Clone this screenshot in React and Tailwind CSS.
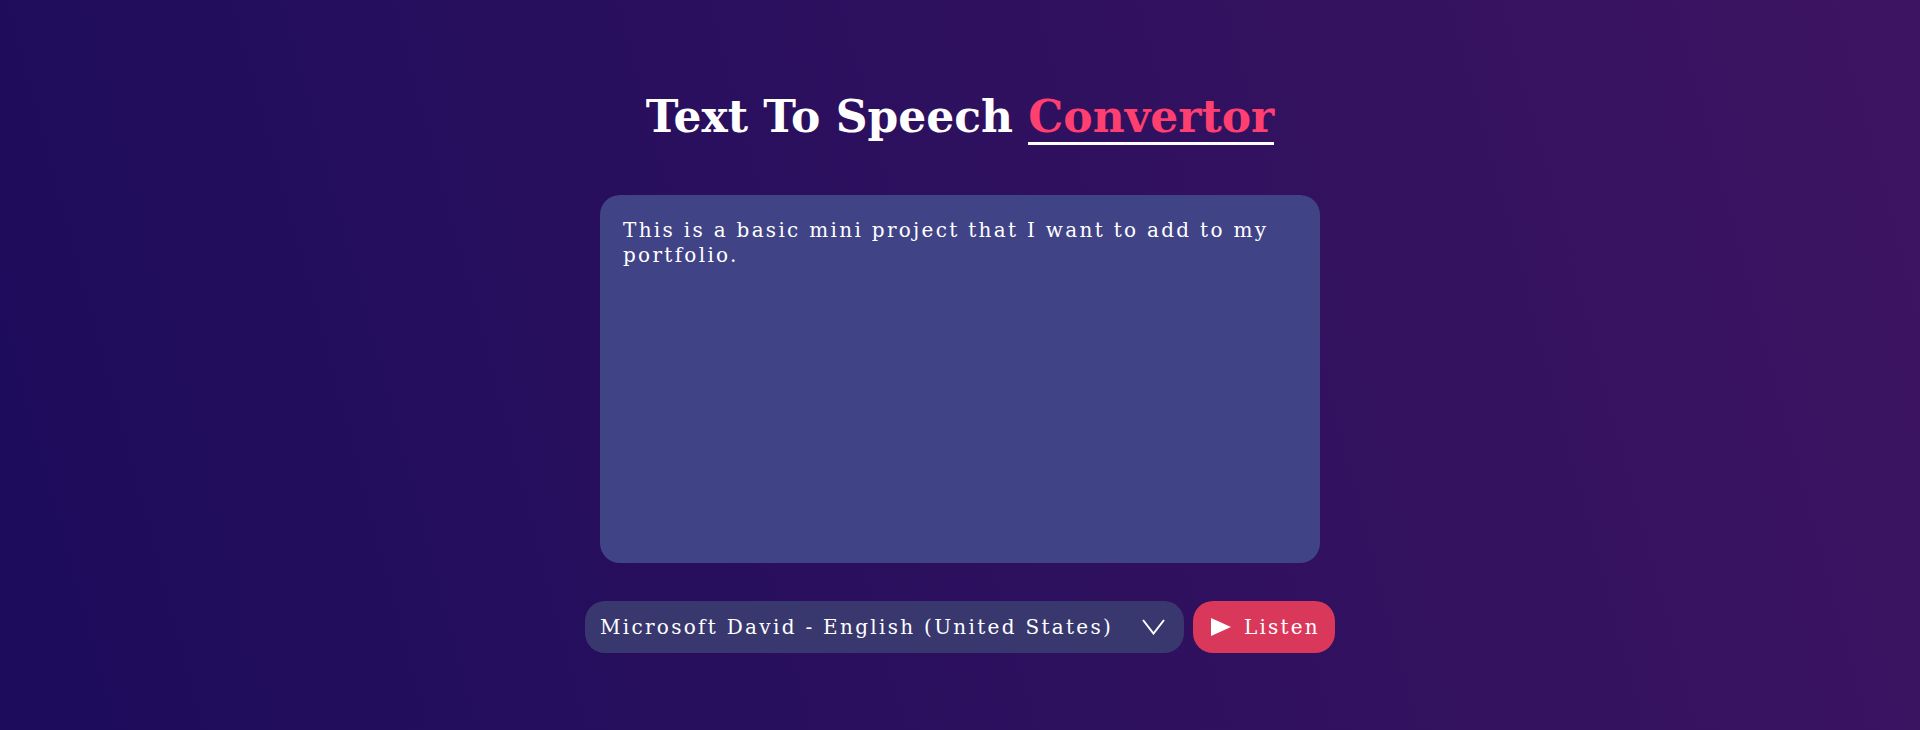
import { useState, useRef, useEffect } from "react";

const voices = [
  "Microsoft David - English (United States)",
  "Microsoft Zira - English (United States)",
  "Google US English",
];

const App = () => {
  const [text, setText] = useState(
    "This is a basic mini project that I want to add to my portfolio."
  );
  const [voice, setVoice] = useState(voices[0]);
  const areaRef = useRef(null);

  useEffect(() => {
    const el = areaRef.current;
    if (el) {
      el.focus();
      el.setSelectionRange(el.value.length, el.value.length);
    }
  }, []);

  const speak = () => {
    if (!window.speechSynthesis) return;
    const utter = new SpeechSynthesisUtterance(text);
    window.speechSynthesis.speak(utter);
  };

  return (
    <div className="min-h-screen w-full bg-[linear-gradient(75deg,#1c0c5b,#3d1462)] flex flex-col items-center font-['DejaVu_Serif',serif]">
      {/* Heading */}
      <h1 className="mt-[81px] text-[44px] leading-[72px] font-bold text-white">
        Text To Speech{" "}
        <span className="text-[#ff3f6f] border-b-[3px] border-white">Convertor</span>
      </h1>

      {/* Text input */}
      <textarea
        ref={areaRef}
        value={text}
        onChange={(e) => setText(e.target.value)}
        className="mt-[42px] w-[720px] h-[368px] rounded-[20px] bg-[#414387] pt-[23px] px-[23px] text-[20px] leading-[25px] tracking-[2.3px] text-white resize-none outline-none caret-white font-['DejaVu_Serif',serif]"
      />

      {/* Controls */}
      <div className="mt-[38px] flex items-center gap-[9px]">
        <div className="relative">
          <select
            value={voice}
            onChange={(e) => setVoice(e.target.value)}
            className="appearance-none w-[599px] h-[52px] rounded-[20px] bg-[#38386f] pl-[15px] pr-[60px] text-[20px] tracking-[2.3px] text-white outline-none font-['DejaVu_Serif',serif]"
          >
            {voices.map((v) => (
              <option key={v} value={v} className="bg-[#38386f]">
                {v}
              </option>
            ))}
          </select>
          <svg
            className="absolute right-[19px] top-[18px] pointer-events-none"
            width="23"
            height="16"
            viewBox="0 0 23 16"
            fill="none"
            stroke="white"
            strokeWidth="2"
          >
            <polyline points="1,1 11.5,14.5 22,1" />
          </svg>
        </div>
        <button
          onClick={speak}
          className="w-[142px] h-[52px] rounded-[20px] bg-[#d9385a] flex items-center pl-[18px] gap-[13px] text-white text-[20px] tracking-[2.2px]"
        >
          <svg width="20" height="18" viewBox="0 0 20 18" fill="white">
            <polygon points="0,0 20,9 0,18" />
          </svg>
          <span>Listen</span>
        </button>
      </div>
    </div>
  );
};

export default App;
